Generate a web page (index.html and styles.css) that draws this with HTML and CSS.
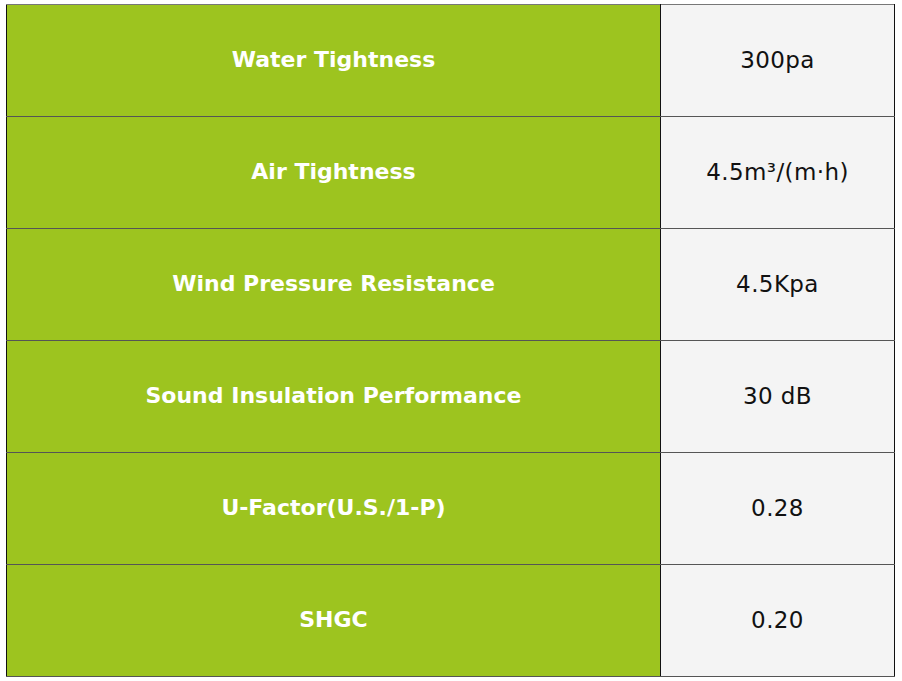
FILE: index.html
```html
<!DOCTYPE html>
<html>
<head>
<meta charset="utf-8">
<link rel="stylesheet" href="styles.css">
</head>
<body>
<div class="wrap">
<table class="spec">
<tr><th>Water Tightness</th><td>300pa</td></tr>
<tr><th>Air Tightness</th><td>4.5m³/(m·h)</td></tr>
<tr><th>Wind Pressure Resistance</th><td>4.5Kpa</td></tr>
<tr><th>Sound Insulation Performance</th><td>30 dB</td></tr>
<tr><th>U-Factor(U.S./1-P)</th><td>0.28</td></tr>
<tr><th>SHGC</th><td>0.20</td></tr>
</table>
</div>
</body>
</html>
```
FILE: styles.css
```css
html, body { margin: 0; padding: 0; background: #fff; }
.wrap { padding: 4px 0 0 6px; }
.spec {
  border-collapse: collapse;
  width: 889px;
  font-family: "DejaVu Sans", Inter, sans-serif;
}
.spec tr { height: 112px; }
.spec th, .spec td {
  padding: 0 0 2px;
  text-align: center;
  vertical-align: middle;
  border: 1px solid #555;
}
.spec th {
  width: 653px;
  background: #9dc41f;
  color: #fff;
  font-size: 22px;
  font-weight: 700;
  border-left: 1px solid #111;
  border-right: 1px solid #111;
}
.spec td {
  background: #f4f4f4;
  color: #111;
  font-size: 23px;
  letter-spacing: 0.4px;
  font-weight: 400;
  border-right: 1px solid #111;
}
.spec tr:first-child th, .spec tr:first-child td { border-top: 1px solid #777; }
```
